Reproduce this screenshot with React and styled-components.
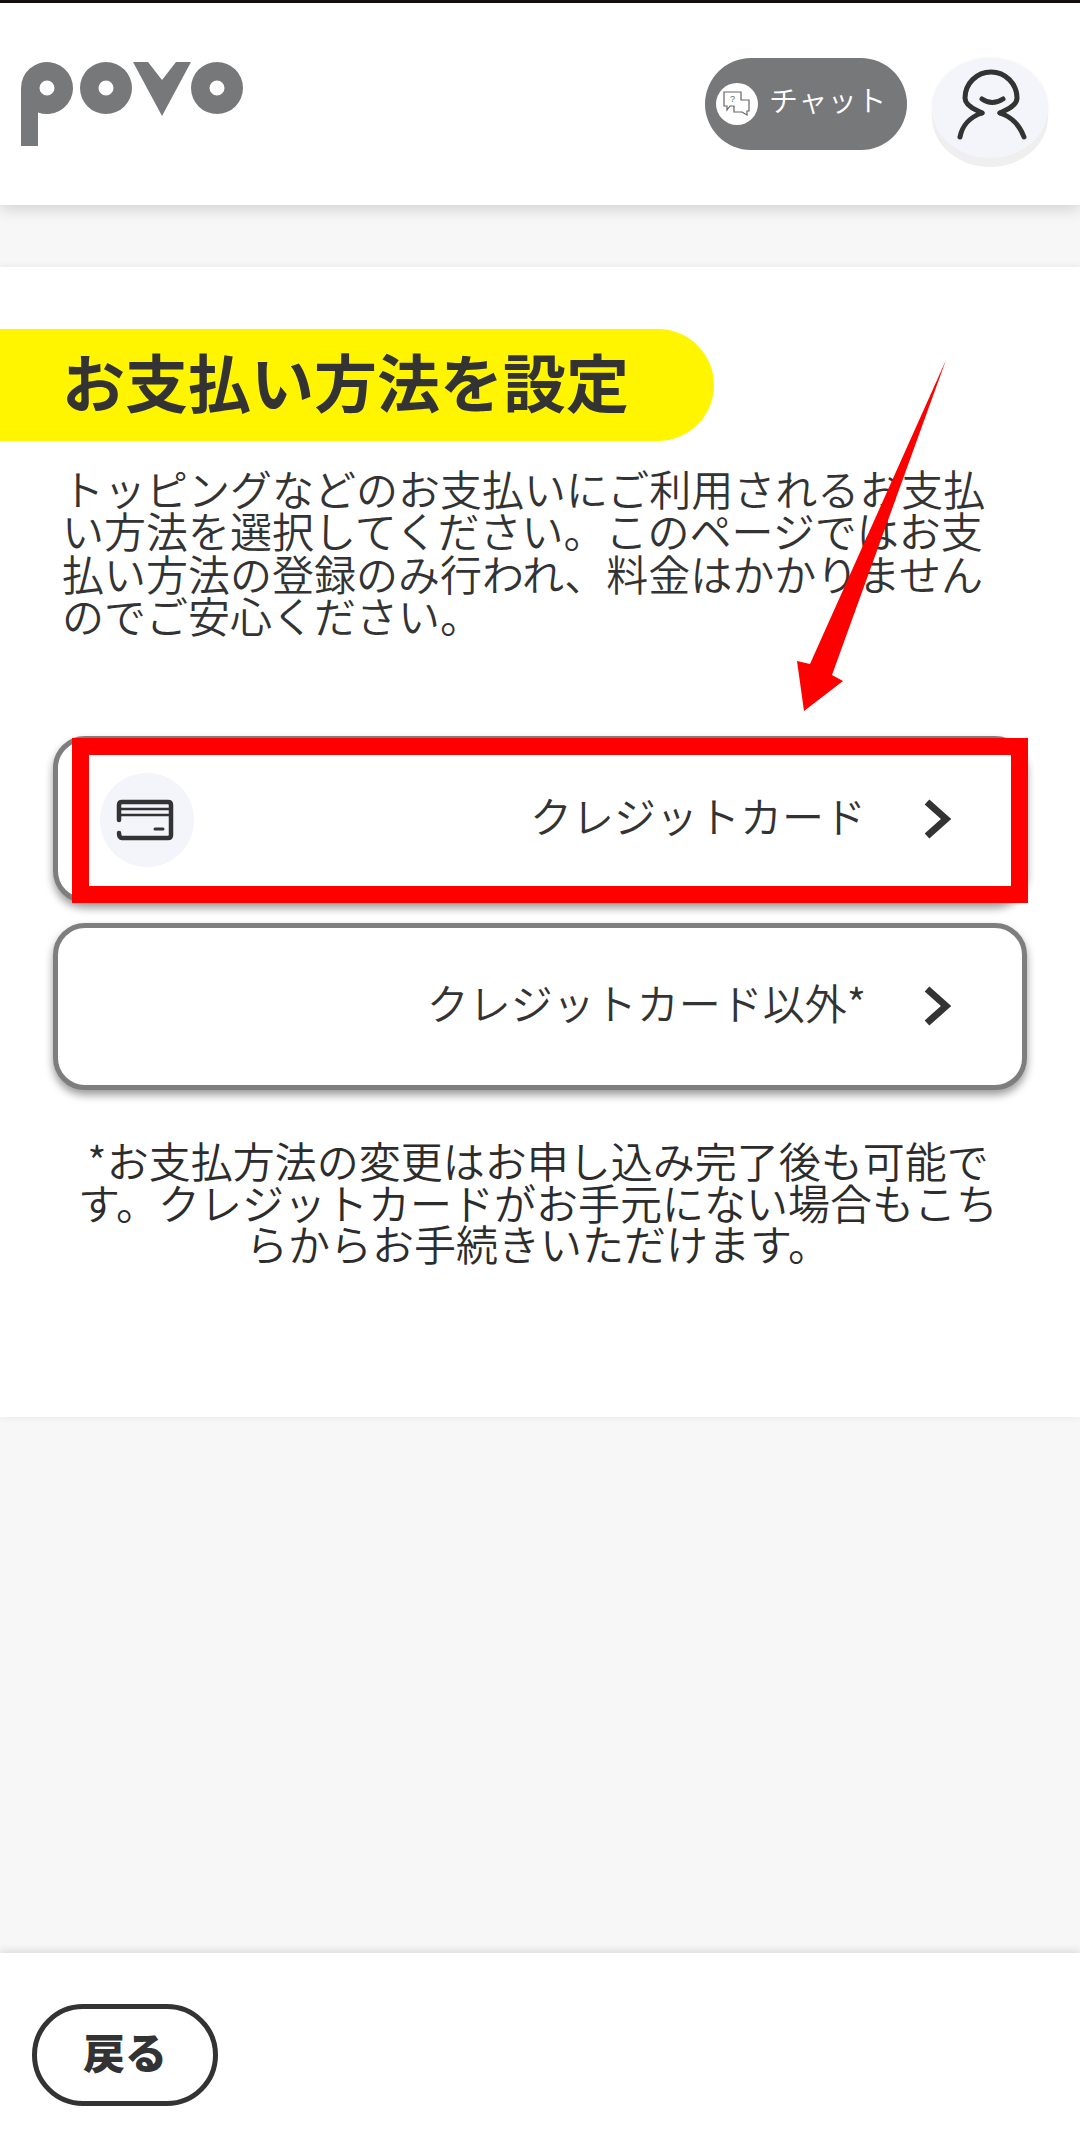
import React from "react";
import styled, { createGlobalStyle } from "styled-components";

const Global = createGlobalStyle`
  html, body { margin: 0; padding: 0; background: #f7f7f7; }
  #root { height: 2148px; }
  * { box-sizing: border-box; }
`;

const Page = styled.div`
  position: relative;
  width: 1080px;
  height: 2148px;
  display: flex;
  flex-direction: column;
  overflow: hidden;
  background: #f7f7f7;
  color: #333;
  font-family: "Noto Sans CJK JP", "Noto Sans", sans-serif;
`;

const Header = styled.header`
  height: 205px;
  flex: none;
  background: #fff;
  border-top: 3px solid #14100e;
  padding: 55px 32px 0 21px;
  display: flex;
  justify-content: space-between;
  align-items: flex-start;
  box-shadow: 0 5px 14px rgba(0, 0, 0, 0.14);
  position: relative;
  z-index: 1;
`;

const Logo = styled.svg`
  width: 224px;
  height: 100px;
  margin-top: -3px;
  display: block;
`;

const HeaderActions = styled.div`
  display: flex;
  align-items: flex-start;
  gap: 25px;
`;

const ChatPill = styled.div`
  width: 202px;
  height: 92px;
  border-radius: 46px;
  background: #77787a;
  display: flex;
  align-items: center;
  padding-left: 11px;
  gap: 11px;
  color: #fff;
  font-size: 29px;
  font-weight: 350;
  letter-spacing: 0.5px;
`;

const ChatBadge = styled.span`
  width: 42px;
  height: 42px;
  flex: none;
  border-radius: 50%;
  background: #fff;
  display: flex;
  align-items: center;
  justify-content: center;
`;

const ChatLabel = styled.span`
  line-height: 1;
  position: relative;
  top: -5px;
`;

const Avatar = styled.div`
  width: 116px;
  height: 100px;
  background: #f4f5fa;
  box-shadow: 0 9px 0 #efefef, 0 0 3px #f0f0f0;
  border-radius: 50%;
  overflow: visible;
`;

const Card = styled.section`
  margin-top: 62px;
  height: 1150px;
  flex: none;
  background: #fff;
  box-shadow: 0 0 8px rgba(0, 0, 0, 0.07);
  padding-top: 62px;
`;

const TitlePill = styled.div`
  width: 714px;
  height: 112px;
  background: #fff500;
  border-radius: 0 56px 56px 0;
  padding-left: 62px;
  display: flex;
  align-items: center;
`;

const Title = styled.h1`
  margin: 0;
  font-size: 63px;
  font-weight: 700;
  line-height: 1;
  white-space: nowrap;
  position: relative;
  top: -6px;
`;

const Intro = styled.p`
  margin: 26px 0 100px;
  padding: 0 60px 0 62px;
  font-size: 42px;
  line-height: 42.3px;
  font-weight: 350;
  color: #333;
`;

const Options = styled.div`
  display: flex;
  flex-direction: column;
  gap: 20px;
  padding: 0 53px;
`;

const Option = styled.div`
  height: 167px;
  border: 5px solid #7e7e7e;
  border-radius: 32px;
  background: #fff;
  box-shadow: 0 5px 9px rgba(0, 0, 0, 0.4);
  display: flex;
  align-items: center;
  justify-content: flex-end;
  padding: 0 71px 0 42px;
  position: relative;
`;

const IconCircle = styled.div`
  width: 94px;
  height: 94px;
  border-radius: 50%;
  background: #f4f5fa;
  margin-right: auto;
`;

const OptionLabel = styled.span`
  font-size: 42px;
  font-weight: 350;
  line-height: 1;
  margin-right: 57px;
  position: relative;
  top: -5px;
`;

const ChevronIcon = styled.svg`
  position: relative;
  top: -1px;
  flex: none;
`;

const Note = styled.p`
  margin: 49px 0 0;
  padding: 0 72px 0 68px;
  font-size: 42px;
  line-height: 41.5px;
  font-weight: 350;
  text-align: center;
  color: #2c2c2c;
`;

const Footer = styled.footer`
  margin-top: auto;
  height: 195px;
  flex: none;
  background: #fff;
  box-shadow: 0 -2px 8px rgba(0, 0, 0, 0.12);
  padding: 51px 0 0 32px;
`;

const BackButton = styled.div`
  width: 186px;
  height: 102px;
  border: 5px solid #333;
  border-radius: 51px;
  display: flex;
  align-items: center;
  justify-content: center;
  font-size: 42px;
  font-weight: 900;
  padding-bottom: 9px;
`;

const RedFrame = styled.div`
  position: absolute;
  left: 72px;
  top: 738px;
  width: 956px;
  height: 165px;
  border: 17px solid #ff0000;
`;

const Arrow = styled.svg`
  position: absolute;
  left: 0;
  top: 0;
  pointer-events: none;
`;

const Chevron = () => (
  <ChevronIcon width="28" height="40" viewBox="0 0 28 40">
    <path d="M4 3 L23 20 L4 37" fill="none" stroke="#333" strokeWidth="7" />
  </ChevronIcon>
);

export default function App() {
  return (
    <Page>
      <Global />
      <Header>
        <Logo viewBox="0 0 224 100">
          <g fill="#77787a" fillRule="evenodd">
            <path d="M0 33 A26 26 0 1 1 17 57.5 V91 H0 Z M26 33 m-7.5 0 a7.5 7.5 0 1 0 15 0 a7.5 7.5 0 1 0 -15 0 Z" />
            <path d="M85 7 a26 26 0 1 1 0 52 a26 26 0 1 1 0 -52 Z M85 25.5 a7.5 7.5 0 1 0 0 15 a7.5 7.5 0 1 0 0 -15 Z" />
            <path d="M112 7 H127 L141 25 L155 7 H170 L141 61 Z" />
            <path d="M196 7 a26 26 0 1 1 0 52 a26 26 0 1 1 0 -52 Z M196 25.5 a7.5 7.5 0 1 0 0 15 a7.5 7.5 0 1 0 0 -15 Z" />
          </g>
        </Logo>
        <HeaderActions>
          <ChatPill>
            <ChatBadge>
              <svg width="30" height="30" viewBox="0 0 30 30" fill="none" stroke="#666" strokeWidth="1.2">
                <path d="M2 3 H19 V17 H8 L5 21 V17 H2 Z" fill="#fff" />
                <path d="M19 11 H27 V22 H25 V26 L20 23 H12 V17" fill="#fff" />
                <text x="8" y="13" fontSize="9" fill="#666" stroke="none" fontFamily="Liberation Sans, sans-serif">?</text>
              </svg>
            </ChatBadge>
            <ChatLabel>チャット</ChatLabel>
          </ChatPill>
          <Avatar>
            <svg width="116" height="116" viewBox="0 0 116 116" fill="none" stroke="#333" strokeWidth="5" strokeLinecap="round" strokeLinejoin="round">
              <path d="M50 55 L46 53 C37 49 33 45 33 40 A26 26 0 0 1 85 40 C85 45 81 49 72 53 L68 55" />
              <path d="M50 55 C38 59 30 68 28 79" />
              <path d="M68 55 C80 59 88 68 92 79" />
              <path d="M50 41 Q60 48 71 41" />
            </svg>
          </Avatar>
        </HeaderActions>
      </Header>
      <Card>
        <TitlePill>
          <Title>お支払い方法を設定</Title>
        </TitlePill>
        <Intro>
          トッピングなどのお支払いにご利用されるお支払い方法を選択してください。このページではお支払い方法の登録のみ行われ、料金はかかりませんのでご安心ください。
        </Intro>
        <Options>
          <Option>
            <IconCircle>
              <svg width="94" height="94" viewBox="0 0 94 94" fill="none" stroke="#333" strokeWidth="4.5" strokeLinecap="round">
                <path d="M19 47 V32 Q19 29 22 29 H68 Q71 29 71 32 V62 Q71 65 68 65 H22 Q19 65 19 60" />
                <path d="M19 36 H71" strokeWidth="2.5" />
                <path d="M19 42 H71" strokeWidth="2.5" />
                <path d="M55 56 H63" strokeWidth="3" />
              </svg>
            </IconCircle>
            <OptionLabel>クレジットカード</OptionLabel>
            <Chevron />
          </Option>
          <Option>
            <OptionLabel>クレジットカード以外*</OptionLabel>
            <Chevron />
          </Option>
        </Options>
        <Note>*お支払方法の変更はお申し込み完了後も可能です。クレジットカードがお手元にない場合もこちらからお手続きいただけます。</Note>
      </Card>
      <Footer>
        <BackButton>戻る</BackButton>
      </Footer>
      <RedFrame />
      <Arrow width="1080" height="2148" viewBox="0 0 1080 2148">
        <polygon points="946,360 810,664 797,661 804,711 843,681 832,675" fill="#ff0000" />
      </Arrow>
    </Page>
  );
}
